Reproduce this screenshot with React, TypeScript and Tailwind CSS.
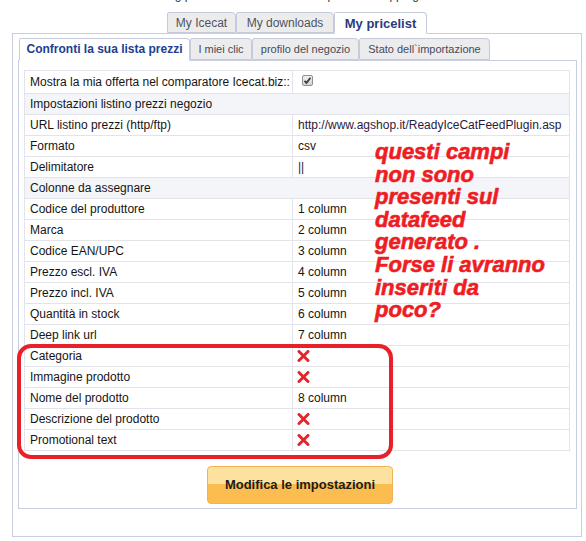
import clsx from "clsx"

type Row =
    | { kind: "field"; label: string; value?: string; cross?: boolean; check?: boolean; tall?: boolean }
    | { kind: "section"; label: string }

const rows: Row[] = [
    { kind: "field", label: "Mostra la mia offerta nel comparatore Icecat.biz::", check: true, tall: true },
    { kind: "section", label: "Impostazioni listino prezzi negozio" },
    { kind: "field", label: "URL listino prezzi (http/ftp)", value: "http://www.agshop.it/ReadyIceCatFeedPlugin.asp" },
    { kind: "field", label: "Formato", value: "csv" },
    { kind: "field", label: "Delimitatore", value: "||" },
    { kind: "section", label: "Colonne da assegnare" },
    { kind: "field", label: "Codice del produttore", value: "1 column" },
    { kind: "field", label: "Marca", value: "2 column" },
    { kind: "field", label: "Codice EAN/UPC", value: "3 column" },
    { kind: "field", label: "Prezzo escl. IVA", value: "4 column" },
    { kind: "field", label: "Prezzo incl. IVA", value: "5 column" },
    { kind: "field", label: "Quantità in stock", value: "6 column" },
    { kind: "field", label: "Deep link url", value: "7 column" },
    { kind: "field", label: "Categoria", cross: true },
    { kind: "field", label: "Immagine prodotto", cross: true },
    { kind: "field", label: "Nome del prodotto", value: "8 column" },
    { kind: "field", label: "Descrizione del prodotto", cross: true },
    { kind: "field", label: "Promotional text", cross: true },
]

const note = ["questi campi", "non sono", "presenti sul", "datafeed", "generato .", "Forse li avranno", "inseriti da", "poco?"]

const Cross = () => (
    <svg width="13" height="12" viewBox="0 0 13 12" className="mt-[4px] ml-[4px]">
        <path d="M2 1.5 L11 10.5 M11 1.5 L2 10.5" stroke="#e3262b" strokeWidth="3" strokeLinecap="round" />
    </svg>
)

const Checkbox = () => (
    <div className="ml-[9px] mt-[4px] w-[11px] h-[11px] rounded-[2px] border border-[#8f8f8f] bg-[linear-gradient(#f0f0f0,#d4d4d4)] flex items-center justify-center">
        <svg width="9" height="9" viewBox="0 0 9 9">
            <path d="M1.5 4.8 L3.5 6.8 L7.5 1.8" stroke="#3a3a3a" strokeWidth="1.8" fill="none" />
        </svg>
    </div>
)

const TopTab = ({ label, w, active }: { label: string; w: string; active?: boolean }) => (
    <div className={clsx(
        "flex items-center justify-center border border-[#c6cadd] rounded-tr-[4px] rounded-tl-[2px]",
        w,
        active
            ? "relative z-10 h-[22px] bg-white border-b-white text-[13px] font-bold text-[#2c3a7e] pt-[1px]"
            : "h-[21px] bg-[#ececec] text-[12px] text-[#4e5366]"
    )}>
        {label}
    </div>
)

const SubTab = ({ label, w, active }: { label: string; w: string; active?: boolean }) => (
    <div className={clsx(
        "flex items-center justify-center border border-[#c6cadd] rounded-tr-[4px] rounded-tl-[2px]",
        w,
        active
            ? "relative z-10 h-[23px] bg-white border-b-white text-[12px] font-bold text-[#1d3e92] pb-[1px]"
            : "h-[22px] bg-[#ececec] text-[11px] text-[#454a5c]"
    )}>
        {label}
    </div>
)

export default function App() {
    return <div className="relative w-[586px] h-[541px] overflow-hidden bg-white font-['Liberation_Sans',Arial,sans-serif]">
        <div className="h-[12px] overflow-hidden">
            <p className="-mt-[12px] leading-[14px] text-[12px] text-[#333] pl-[168px]">ag price list for the Icecat comparison shopping</p>
        </div>

        <div className="flex items-start h-[21px] pl-[167px]">
            <TopTab label="My Icecat" w="w-[69px]" />
            <TopTab label="My downloads" w="w-[98px]" />
            <TopTab label="My pricelist" w="w-[93px]" active />
        </div>

        <div className="ml-[12px] w-[570px] h-[504px] border border-[#c8cde3] pt-[4px] pl-[5px]">
            <div className="flex items-start h-[22px] pl-px">
                <SubTab label="Confronti la sua lista prezzi" w="w-[171px]" active />
                <SubTab label="I miei clic" w="w-[62px]" />
                <SubTab label="profilo del negozio" w="w-[107px]" />
                <SubTab label="Stato dell`importazione" w="w-[131px]" />
            </div>

            <div className="w-[559px] h-[449px] border border-[#c8cde3] pt-[9px] pl-[5px]">
                <div className="w-[546px] border-x border-t border-[#e2e4ea] text-[12px] text-[#151515]">
                    {rows.map((row, i) => row.kind === "section" ? (
                        <div key={i} className="h-[21px] border-b border-[#e2e4ea] bg-[#f4f5f9] pl-[5px] flex items-center">
                            {row.label}
                        </div>
                    ) : (
                        <div key={i} className={clsx("flex border-b border-[#e2e4ea]", row.tall ? "h-[23px]" : "h-[21px]")}>
                            <div className="w-[268px] shrink-0 border-r border-[#e2e4ea] pl-[5px] flex items-center">{row.label}</div>
                            <div className="flex-1 min-w-0 overflow-hidden whitespace-nowrap">
                                {row.check && <Checkbox />}
                                {row.cross && <Cross />}
                                {row.value && <div className={clsx("pl-[5px] h-full flex items-center", row.value === "||" || row.value.startsWith("http") ? "text-[#2a1a3e]" : "")}>{row.value}</div>}
                            </div>
                        </div>
                    ))}
                </div>

                <div className="flex justify-center mt-[15px]">
                    <button className="w-[186px] h-[38px] rounded-[4px] border border-[#f2b352] bg-[linear-gradient(#fde19e_0%,#fde19e_48%,#fbbd50_48%,#fbbd50_100%)] text-[13px] font-bold text-[#1b1b1b]">
                        Modifica le impostazioni
                    </button>
                </div>
            </div>
        </div>

        {/* annotation drawn over the screenshot */}
        <div className="absolute left-[17px] top-[344px] w-[376px] h-[115px] border-[4px] border-[#e8202a] rounded-[14px]" />
        <div className="absolute left-[375px] top-[141px] text-[22px] leading-[22.6px] font-bold italic text-[#ee1d23] [-webkit-text-stroke:0.6px_#ee1d23] whitespace-nowrap">
            {note.map((line) => <div key={line}>{line}</div>)}
        </div>
    </div>
}
